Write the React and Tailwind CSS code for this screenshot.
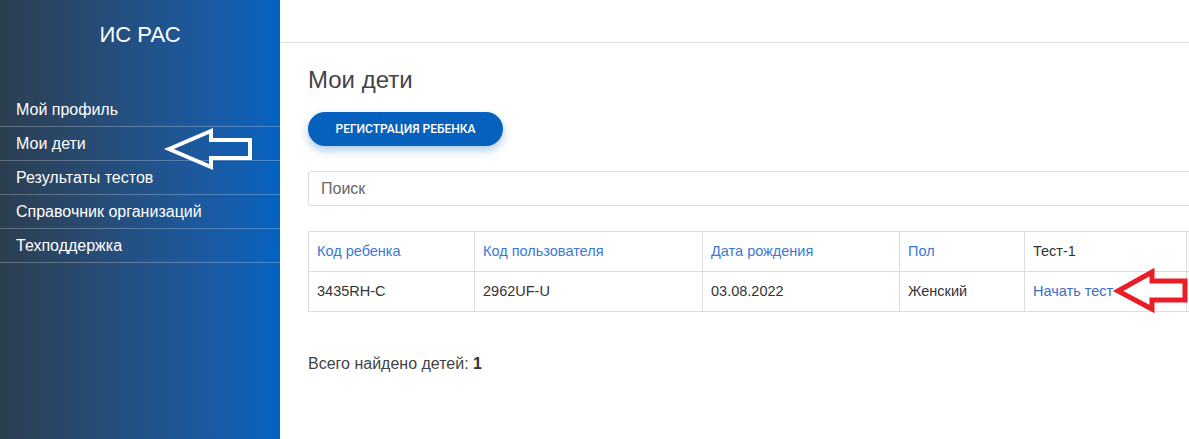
import React from 'react';

const menu = ['Мой профиль', 'Мои дети', 'Результаты тестов', 'Справочник организаций', 'Техподдержка'];

const columns = [
  { title: 'Код ребенка', width: 'w-[166px]', link: true },
  { title: 'Код пользователя', width: 'w-[228px]', link: true },
  { title: 'Дата рождения', width: 'w-[197px]', link: true },
  { title: 'Пол', width: 'w-[125px]', link: true },
  { title: 'Тест-1', width: 'w-[162px]', link: false },
  { title: '', width: 'w-[150px]', link: false },
];

const row = ['3435RH-C', '2962UF-U', '03.08.2022', 'Женский'];

const Sidebar = () => (
  <aside className="w-[280px] shrink-0 h-full bg-linear-to-r from-[#2c3e50] to-[#0563c0] text-white">
    <div className="h-[93px] pt-[21px] text-center text-[22px] leading-[28px]">ИС РАС</div>
    <ul>
      {menu.map((item) => (
        <li
          key={item}
          className="h-[34px] flex items-center pl-4 text-[16px] border-b border-white/25"
        >
          {item}
        </li>
      ))}
    </ul>
  </aside>
);

const App = () => {
  return (
    <div
      className="relative w-[1189px] h-[439px] overflow-hidden flex bg-white"
      style={{ fontFamily: '"Liberation Sans", Arial, sans-serif' }}
    >
      <Sidebar />

      <main className="flex-1 overflow-hidden">
        <div className="h-[43px] border-b border-[#e2e2e2]" />

        <div className="pl-7 w-[1100px]">
          <h1 className="mt-[22px] text-[24px] leading-[29px] text-[#444]">Мои дети</h1>

          <button
            className="mt-[18px] h-[34px] w-[195px] rounded-full bg-[#0561bd] text-white text-[12px] font-medium uppercase shadow-[0_4px_10px_rgba(5,97,189,0.35)]"
            style={{ fontFamily: 'Roboto, "Liberation Sans", sans-serif' }}
          >
            Регистрация ребенка
          </button>

          <div className="mt-[25px] h-[35px] w-[1040px] border border-[#dcdcdc] rounded-[3px] flex items-center pl-3 text-[16px] text-[#666]">
            Поиск
          </div>

          <table className="mt-[25px] border-collapse text-[14.5px] table-fixed">
            <thead>
              <tr className="h-[40px]">
                {columns.map((c, i) => (
                  <th
                    key={i}
                    className={`${c.width} border border-[#dddddd] px-2 text-left font-normal ${
                      c.link ? 'text-[#3b78d6]' : 'text-[#333]'
                    }`}
                  >
                    {c.title}
                  </th>
                ))}
              </tr>
            </thead>
            <tbody>
              <tr className="h-[40px] text-[#333]">
                {row.map((v) => (
                  <td key={v} className="border border-[#dddddd] px-2">
                    {v}
                  </td>
                ))}
                <td className="border border-[#dddddd] px-2 text-[#3b6fc7]">Начать тест</td>
                <td className="border border-[#dddddd] px-2" />
              </tr>
            </tbody>
          </table>

          <p className="mt-[42px] text-[16px] leading-[20px] text-[#444]">
            Всего найдено детей: <b className="text-[#333]">1</b>
          </p>
        </div>
      </main>

      {/* annotation arrows */}
      <svg className="absolute inset-0 pointer-events-none" width="1189" height="439">
        <polygon
          points="169,149 211,131 211,140 250,140 250,158 211,158 211,167"
          fill="none"
          stroke="#ffffff"
          strokeWidth="4"
          strokeLinejoin="miter"
        />
        <polygon
          points="1118,291 1152,272 1152,281 1185,281 1185,300 1152,300 1152,309"
          fill="none"
          stroke="#e81d25"
          strokeWidth="5"
          strokeLinejoin="miter"
        />
      </svg>
    </div>
  );
};

export default App;
